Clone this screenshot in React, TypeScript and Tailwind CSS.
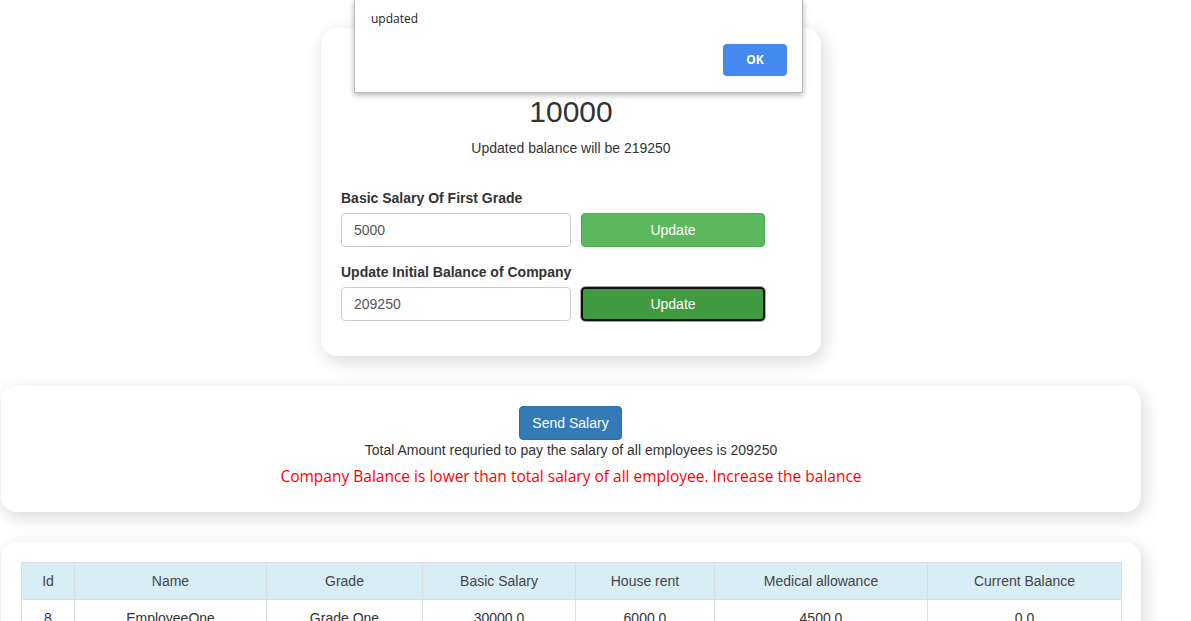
import React from "react";

const cols = [
  { h: "Id", w: "w-[53px]", v: "8" },
  { h: "Name", w: "w-[192px]", v: "EmployeeOne" },
  { h: "Grade", w: "w-[156px]", v: "Grade One" },
  { h: "Basic Salary", w: "w-[153px]", v: "30000.0" },
  { h: "House rent", w: "w-[139px]", v: "6000.0" },
  { h: "Medical allowance", w: "w-[213px]", v: "4500.0" },
  { h: "Current Balance", w: "w-[194px]", v: "0.0" },
];

export default function App() {
  return (
    <div className="relative min-h-[621px] w-[1191px] overflow-hidden bg-white font-['Liberation_Sans',Arial,sans-serif] text-[14px] text-[#333]">
      <div className="ml-[1px] flex w-[1140px] flex-col gap-[30px] pt-[28px]">
        {/* Card 1 */}
        <div className="mx-auto flex w-[500px] flex-col rounded-[16px] bg-white px-[20px] pb-[35px] pt-[67px] shadow-[3px_5px_18px_rgba(0,0,0,0.16)]">
          <div className="text-center text-[30px] leading-[33px] text-[#333]">10000</div>
          <div className="mt-[10px] text-center leading-[20px]">Updated balance will be 219250</div>
          <div className="mt-[30px] font-bold leading-[20px]">Basic Salary Of First Grade</div>
          <div className="mt-[5px] flex gap-[10px]">
            <div className="flex h-[34px] w-[230px] items-center rounded-[4px] border border-[#ccc] px-[12px] text-[#555]">5000</div>
            <div className="flex h-[34px] w-[184px] items-center justify-center rounded-[4px] border border-[#4cae4c] bg-[#5cb85c] text-white">Update</div>
          </div>
          <div className="mt-[15px] font-bold leading-[20px]">Update Initial Balance of Company</div>
          <div className="mt-[5px] flex gap-[10px]">
            <div className="flex h-[34px] w-[230px] items-center rounded-[4px] border border-[#ccc] px-[12px] text-[#555]">209250</div>
            <div className="flex h-[34px] w-[184px] items-center justify-center rounded-[4px] border-2 border-[#111] bg-[#409b40] text-white outline outline-1 outline-[#aaa]">Update</div>
          </div>
        </div>

        {/* Card 2 */}
        <div className="flex flex-col items-center rounded-[16px] bg-white pb-[25px] pt-[20px] shadow-[3px_5px_18px_rgba(0,0,0,0.16)]">
          <div className="-ml-[1px] flex h-[34px] w-[103px] items-center justify-center rounded-[4px] border border-[#2e6da4] bg-[#337ab7] text-white">Send Salary</div>
          <div className="leading-[20px]">Total Amount requried to pay the salary of all employees is 209250</div>
          <div className="mt-[5px] font-['Open_Sans',sans-serif] text-[15.5px] leading-[22px] text-[#ff0000]">
            Company Balance is lower than total salary of all employee. Increase the balance
          </div>
        </div>

        {/* Card 3 */}
        <div className="rounded-[16px] bg-white p-[20px] shadow-[3px_5px_18px_rgba(0,0,0,0.16)]">
          <table className="w-[1100px] table-fixed border-collapse">
            <thead>
              <tr className="bg-[#d9edf7]">
                {cols.map((c) => (
                  <th key={c.h} className={`${c.w} border border-[#ddd] px-[8px] py-[8px] text-center font-normal leading-[20px] text-[#444]`}>
                    {c.h}
                  </th>
                ))}
              </tr>
            </thead>
            <tbody>
              <tr>
                {cols.map((c) => (
                  <td key={c.h} className="border border-[#ddd] px-[8px] py-[8px] text-center leading-[20px] text-[#333]">
                    {c.v}
                  </td>
                ))}
              </tr>
            </tbody>
          </table>
        </div>
      </div>

      {/* Alert dialog */}
      <div className="absolute left-[354px] top-0 h-[93px] w-[449px] border border-[#bbb] border-t-0 bg-white shadow-[0_2px_6px_rgba(0,0,0,0.3)] font-['Open_Sans',sans-serif]">
        <div className="absolute left-[16px] top-[10px] text-[12px] leading-[18px] text-[#222]">updated</div>
        <div className="absolute left-[368px] top-[44px] flex h-[32px] w-[64px] items-center justify-center rounded-[4px] bg-[#4389ee] text-[12px] font-bold text-white">OK</div>
      </div>
    </div>
  );
}
